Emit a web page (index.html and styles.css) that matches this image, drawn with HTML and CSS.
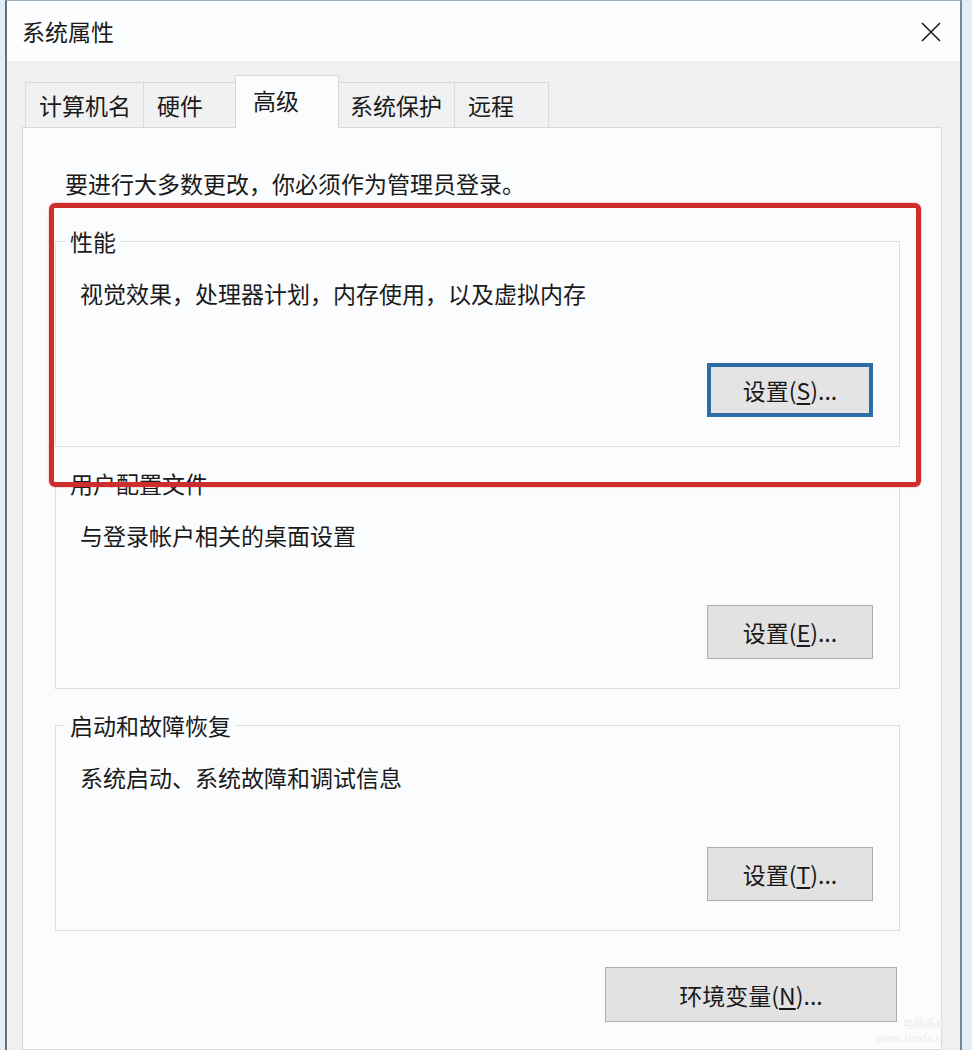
FILE: index.html
```html
<!DOCTYPE html>
<html>
<head>
<meta charset="UTF-8">
<title>系统属性</title>
<link rel="stylesheet" href="styles.css">
</head>
<body>
	<div class="window">
		<div class="titlebar">
			<span class="title">系统属性</span>
			<span class="close">
				<svg width="22" height="22" viewBox="0 0 22 22">
					<path d="M2 2 L20 20 M20 2 L2 20" stroke="#1f1f1f" stroke-width="1.6" fill="none"/>
				</svg>
			</span>
		</div>

		<div class="client">
			<div class="tabs">
				<div class="tab">计算机名</div>
				<div class="tab">硬件</div>
				<div class="tab active">高级</div>
				<div class="tab">系统保护</div>
				<div class="tab">远程</div>
			</div>

			<div class="panel">
				<p class="note">要进行大多数更改，你必须作为管理员登录。</p>

				<div class="group perf">
					<div class="group-title">性能</div>
					<p class="desc">视觉效果，处理器计划，内存使用，以及虚拟内存</p>
					<div class="actions">
						<button class="btn focused">设置(<u>S</u>)...</button>
					</div>
					<div class="highlight"></div>
				</div>

				<div class="group">
					<div class="group-title">用户配置文件</div>
					<p class="desc">与登录帐户相关的桌面设置</p>
					<div class="actions">
						<button class="btn">设置(<u>E</u>)...</button>
					</div>
				</div>

				<div class="group">
					<div class="group-title">启动和故障恢复</div>
					<p class="desc">系统启动、系统故障和调试信息</p>
					<div class="actions">
						<button class="btn">设置(<u>T</u>)...</button>
					</div>
				</div>

				<div class="actions bottom">
					<button class="btn wide">环境变量(<u>N</u>)...</button>
				</div>
			</div>
		</div>

		<div class="watermark">电脑系统城<br>www.dnxtc.com</div>
	</div>
</body>
</html>
```

FILE: styles.css
```css
body {
	margin: 0;
	background-color: #e4edf4;
	font-family: "Noto Sans CJK SC", "Noto Sans", sans-serif;
	color: #1a1a1a;
	overflow: hidden;
}

.window {
	position: relative;
	margin-left: 5px;
	width: 957px;
	height: 1050px;
	box-sizing: border-box;
	border-top: 1px solid #9aaebf;
	border-left: 2px solid #5e7284;
	border-right: 2px solid #72889b;
	display: flex;
	flex-direction: column;
	overflow: hidden;
}

.titlebar {
	height: 60px;
	flex: none;
	background-color: #fdfeff;
	display: flex;
	align-items: center;
	justify-content: space-between;
	padding: 0 18px 0 15px;
}

.title {
	font-size: 23px;
	line-height: 30px;
}

.close {
	display: flex;
	margin-top: 1px;
}

.client {
	flex: 1;
	background-color: #eff0f2;
	padding: 0 18px 0 15px;
	display: flex;
	flex-direction: column;
}

.tabs {
	height: 66px;
	flex: none;
	display: flex;
	align-items: flex-end;
	padding-left: 4px;
}

.tab {
	position: relative;
	height: 45px;
	min-width: 95px;
	box-sizing: border-box;
	margin-left: -1px;
	padding: 0 12px 0 13px;
	border: 1px solid #d8d9db;
	border-bottom: none;
	background-color: #f0f1f2;
	font-size: 23px;
	line-height: 44px;
	white-space: nowrap;
}

.tab.active {
	z-index: 1;
	height: 53px;
	min-width: 104px;
	margin: 0 -2px -1px -3px;
	padding-left: 17px;
	background-color: #fbfcfd;
	line-height: 48px;
}

.panel {
	flex: 1;
	border: 1px solid #d8d9db;
	background-color: #fbfcfd;
	padding: 39px 41px 0 32px;
}

.note {
	margin: 0 0 0 10px;
	font-size: 23px;
	line-height: 32px;
}

.group {
	position: relative;
	margin-top: 36px;
	border: 1px solid #dcdddf;
	padding: 0 26px 29px 24px;
}

.perf {
	margin-top: 42px;
}

.group-title {
	width: fit-content;
	margin: -13px 0 0 -15px;
	padding: 0 4px 0 5px;
	background-color: #fbfcfd;
	font-size: 23px;
	line-height: 24px;
}

.desc {
	margin: 24px 0 0 0;
	font-size: 23px;
	line-height: 32px;
}

.actions {
	display: flex;
	justify-content: flex-end;
	margin-top: 54px;
}

.btn {
	width: 166px;
	height: 54px;
	box-sizing: border-box;
	border: 1px solid #acacac;
	background-color: #e2e2e3;
	font-family: "Noto Sans CJK SC", "Noto Sans", sans-serif;
	font-size: 23px;
	color: #1a1a1a;
	padding: 0;
}

.btn u {
	text-underline-offset: 3px;
}

.btn.focused {
	border: 4px solid #2e6ca8;
	background-color: #e4e4e5;
}

.btn.wide {
	width: 292px;
	height: 55px;
}

.actions.bottom {
	margin: 36px 3px 0 0;
}

/* red annotation box drawn over the first group, above the next title */
.highlight {
	position: absolute;
	z-index: 2;
	top: -39px;
	left: -7px;
	right: -22px;
	bottom: -41px;
	border: 5px solid #cf2c2c;
	border-radius: 6px;
	box-shadow: 0 0 2px rgba(207, 44, 44, 0.5);
	pointer-events: none;
}

.watermark {
	position: absolute;
	right: 2px;
	bottom: 6px;
	font-size: 11px;
	line-height: 14px;
	text-align: right;
	color: #eceef0;
}
```
